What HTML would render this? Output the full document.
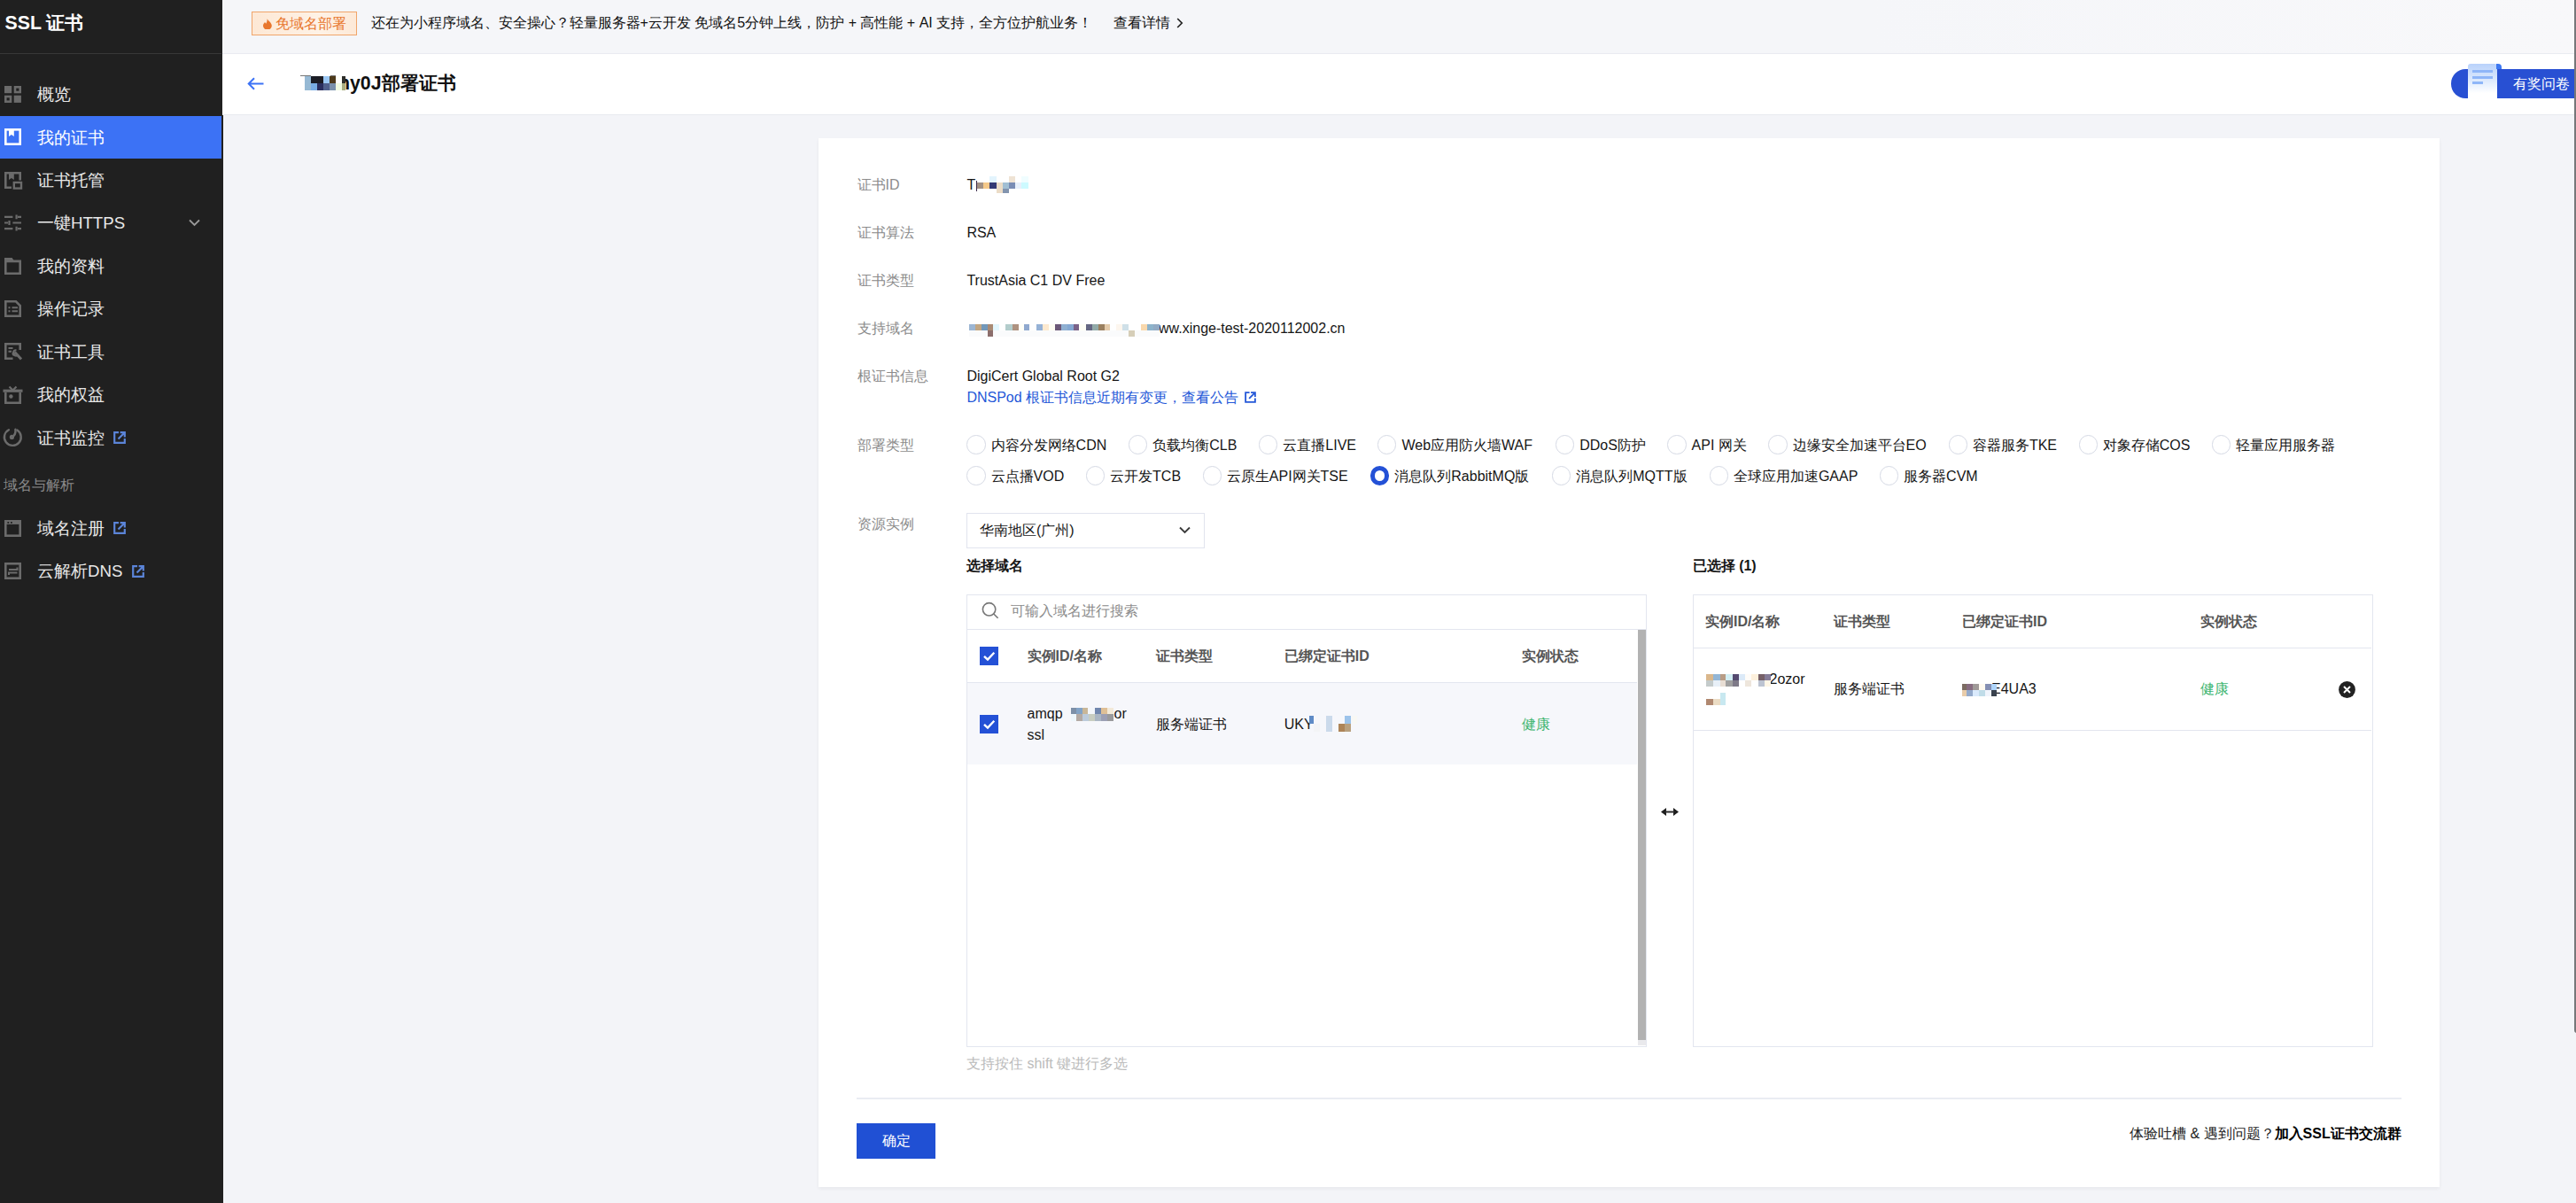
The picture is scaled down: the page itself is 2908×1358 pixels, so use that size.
<!DOCTYPE html>
<html lang="zh"><head><meta charset="utf-8"><title>SSL 证书</title>
<style>
*{box-sizing:border-box;margin:0;padding:0}
html,body{width:2908px;height:1358px;overflow:hidden}
body{font-family:"Liberation Sans",sans-serif;font-size:16px;color:#161616;background:#f3f4f8;position:relative;line-height:24px}
.abs{position:absolute}
#side{position:absolute;left:0;top:0;width:251.5px;height:1358px;background:#202020}
#side .hd{position:absolute;left:0;top:0;width:250px;height:61.1px;border-bottom:1.2px solid #383838}
#side .hd span{position:absolute;left:5.5px;top:11.5px;font-size:21.3px;font-weight:bold;color:#fff;line-height:28px;white-space:nowrap}
.mi{position:absolute;left:0;width:251px;height:48.4px;color:#e8e8e8;font-size:18.67px;line-height:48.4px;white-space:nowrap}
.mi.on{background:#3c72f5;color:#fff;width:250.3px}
.mi svg.ic{position:absolute;left:4.9px;top:14.4px;width:19px;height:19px}
.mi span{position:absolute;left:42px;top:0.5px}
.mi svg.ext{position:absolute;top:17px;width:14px;height:14px}
.sec{position:absolute;left:4px;color:#8a8a8a;font-size:16px;line-height:24px;white-space:nowrap}
#banner{position:absolute;left:251px;top:0;width:2657px;height:61.1px;background:linear-gradient(90deg,#f5f6f9 0%,#f5f6f9 70%,#f8f8fa 100%);border-bottom:1.2px solid #e9ebf1}
#phead{position:absolute;left:251px;top:61px;width:2657px;height:68.6px;background:#fff;border-bottom:1.8px solid #e8eaf0}
#card{position:absolute;left:924px;top:156px;width:1830px;height:1184px;background:#fff;box-shadow:0 2px 4px rgba(0,0,0,.05)}
.t{position:absolute;white-space:nowrap;line-height:24px}
.lb{color:#8c8c8c}
.rd{position:absolute;width:21.3px;height:21.3px;border-radius:50%;border:1.3px solid #d5d9e4;background:#fff}
.rd.on{border:5.5px solid #2451d6}
</style></head><body>
<div id="side">
<div class="hd"><span>SSL 证书</span></div>
<div class="mi" style="top:82.8px"><svg class="ic" viewBox="0 0 19 19" overflow="visible"><rect x="0" y="0" width="8.2" height="8.2" fill="#6b6b6b"/><rect x="12" y="1.3" width="5.7" height="5.7" fill="none" stroke="#6b6b6b" stroke-width="2.6"/><rect x="1.3" y="12" width="5.7" height="5.7" fill="none" stroke="#6b6b6b" stroke-width="2.6"/><rect x="10.7" y="10.7" width="8.2" height="8.2" fill="#6b6b6b"/></svg><span>概览</span></div>
<div class="mi on" style="top:131.0px"><svg class="ic" viewBox="0 0 19 19" overflow="visible"><rect x="1.3" y="1.3" width="16.4" height="16.4" fill="none" stroke="#fff" stroke-width="2.6"/><path d="M5 0H10.8V9L7.9 7L5 9Z" fill="#fff"/></svg><span>我的证书</span></div>
<div class="mi" style="top:179.4px"><svg class="ic" viewBox="0 0 19 19" overflow="visible"><path d="M8 17.7H1.3V1.3H17.7V9.5" fill="none" stroke="#6b6b6b" stroke-width="2.6"/><path d="M5 0H10.8V9L7.9 7L5 9Z" fill="#6b6b6b"/><rect x="10.8" y="12" width="8.2" height="6.6" fill="none" stroke="#6b6b6b" stroke-width="2.4"/></svg><span>证书托管</span></div>
<div class="mi" style="top:227.8px"><svg class="ic" viewBox="0 0 19 19" overflow="visible"><g stroke="#6b6b6b" stroke-width="2.2" fill="none"><path d="M0 2.8H9.4M15 2.8H19M13.6 0.4V5.2"/><path d="M0 9.5H4M5.5 7.1V11.9M9.4 9.5H19"/><path d="M0 16.2H9.4M15 16.2H19M13.6 13.8V18.6"/></g></svg><span>一键HTTPS</span><svg class="ext" style="left:213px;top:19px;width:13px;height:9px" viewBox="0 0 13 9"><path d="M1 1.5L6.5 7L12 1.5" fill="none" stroke="#9a9a9a" stroke-width="1.8"/></svg></div>
<div class="mi" style="top:276.2px"><svg class="ic" viewBox="0 0 19 19" overflow="visible"><path d="M1.3 3.9H17.7V17.7H1.3Z" fill="none" stroke="#6b6b6b" stroke-width="2.6"/><path d="M0 0H8.6L11 3.4H0Z" fill="#6b6b6b"/></svg><span>我的资料</span></div>
<div class="mi" style="top:324.7px"><svg class="ic" viewBox="0 0 19 19" overflow="visible"><path d="M1.3 1.3H13L17.7 6V17.7H1.3Z" fill="none" stroke="#6b6b6b" stroke-width="2.6"/><path d="M4.5 8.3H6.5M8.5 8.3H15M4.5 12.3H6.5M8.5 12.3H15" stroke="#6b6b6b" stroke-width="2" fill="none"/></svg><span>操作记录</span></div>
<div class="mi" style="top:373.1px"><svg class="ic" viewBox="0 0 19 19" overflow="visible"><path d="M9.5 17.7H1.3V1.3H17.7V8" fill="none" stroke="#6b6b6b" stroke-width="2.6"/><path d="M4.5 6H9.5M4.5 9.8H8" stroke="#6b6b6b" stroke-width="2" fill="none"/><path d="M9 13.5L12.5 11.5L19 18.5" stroke="#6b6b6b" stroke-width="3" fill="none"/><path d="M13.5 8.5A3 3 0 1 0 15.5 13" stroke="#6b6b6b" stroke-width="2.2" fill="none"/></svg><span>证书工具</span></div>
<div class="mi" style="top:421.6px"><svg class="ic" viewBox="0 0 19 19" overflow="visible"><path d="M-1.5 5.2H20.5" stroke="#6b6b6b" stroke-width="3.2"/><path d="M5.5 0.5L9.5 4.5L13.5 0.5" stroke="#6b6b6b" stroke-width="2.2" fill="none"/><path d="M1.3 7V18.7H17.7V7" fill="none" stroke="#6b6b6b" stroke-width="2.6"/><circle cx="7.4" cy="11.5" r="2.2" fill="#6b6b6b"/></svg><span>我的权益</span></div>
<div class="mi" style="top:470.0px"><svg class="ic" viewBox="0 0 19 19" overflow="visible"><g transform="translate(-0.6,-0.6)"><path d="M5.5 1.8A9.4 9.4 0 1 0 15 2.2" fill="none" stroke="#6b6b6b" stroke-width="2.4" stroke-linecap="round"/><circle cx="9" cy="10" r="2.6" fill="#6b6b6b"/><path d="M9 10C12 8.5 13.5 5 13 1.2" stroke="#6b6b6b" stroke-width="2.4" fill="none" stroke-linecap="round"/></g></svg><span>证书监控</span><svg class="ext" style="left:127.5px" viewBox="0 0 14 14"><path d="M6 1.2H1.2V12.8H12.8V8" fill="none" stroke="#5b84d8" stroke-width="2.2"/><path d="M5.5 8.5L12.5 1.5M7.6 1.2H12.8V6.4" fill="none" stroke="#5b84d8" stroke-width="2.2"/></svg></div>
<div class="mi" style="top:572.2px"><svg class="ic" viewBox="0 0 19 19" overflow="visible"><rect x="1.3" y="1.3" width="16.4" height="16.4" fill="none" stroke="#6b6b6b" stroke-width="2.6"/><rect x="1.3" y="1.3" width="16.4" height="3.6" fill="#6b6b6b"/><rect x="3.4" y="2" width="1.8" height="1.8" fill="#202020"/><rect x="7" y="2" width="1.8" height="1.8" fill="#202020"/></svg><span>域名注册</span><svg class="ext" style="left:127.5px" viewBox="0 0 14 14"><path d="M6 1.2H1.2V12.8H12.8V8" fill="none" stroke="#5b84d8" stroke-width="2.2"/><path d="M5.5 8.5L12.5 1.5M7.6 1.2H12.8V6.4" fill="none" stroke="#5b84d8" stroke-width="2.2"/></svg></div>
<div class="mi" style="top:620.6px"><svg class="ic" viewBox="0 0 19 19" overflow="visible"><rect x="1.3" y="1.3" width="16.4" height="16.4" fill="none" stroke="#6b6b6b" stroke-width="2.6"/><path d="M5 8H14.5V5.5M14.5 11.5H5V14" stroke="#6b6b6b" stroke-width="2" fill="none"/></svg><span>云解析DNS</span><svg class="ext" style="left:149px" viewBox="0 0 14 14"><path d="M6 1.2H1.2V12.8H12.8V8" fill="none" stroke="#5b84d8" stroke-width="2.2"/><path d="M5.5 8.5L12.5 1.5M7.6 1.2H12.8V6.4" fill="none" stroke="#5b84d8" stroke-width="2.2"/></svg></div>
<div class="sec" style="top:535.6px">域名与解析</div>
</div>
<div id="banner">
<div class="abs" style="left:33px;top:12.5px;width:118.5px;height:27px;border:1.3px solid #f0a56a;background:linear-gradient(90deg,#fde8d5 0%,#fef2e6 65%,#fde9d7 100%)"></div>
<svg class="abs" style="left:45.5px;top:20.5px;width:10px;height:12.5px" viewBox="0 0 10 12.5"><path d="M4.6 0C5.4 2.4 9.8 4.6 9.8 8A4.9 4.6 0 0 1 0 8C0 6.4 1.2 5.2 2 4C2.6 4.6 3 5.2 3.2 5.8C4.2 4.4 4.8 2.2 4.6 0Z" fill="#e8762c"/></svg>
<div class="t" style="left:59.5px;top:14.5px;color:#e8762c">免域名部署</div>
<div class="t" style="left:167.5px;top:14px;color:#111">还在为小程序域名、安全操心？轻量服务器+云开发 免域名5分钟上线，防护 + 高性能 + AI 支持，全方位护航业务！</div>
<div class="t" style="left:1006px;top:14px;color:#111">查看详情</div>
<svg class="abs" style="left:1077px;top:20px;width:8px;height:12px" viewBox="0 0 8 12"><path d="M1.2 1L6.2 6L1.2 11" fill="none" stroke="#222" stroke-width="1.7"/></svg>
</div>
<div id="phead">
<svg class="abs" style="left:28px;top:25.5px;width:19px;height:15px" viewBox="0 0 19 15"><path d="M18.5 7.5H2M8 1.2L1.7 7.5L8 13.8" fill="none" stroke="#3c72f5" stroke-width="2"/></svg>
<div class="t" style="left:131px;top:19px;font-size:21.3px;font-weight:bold;line-height:28px;color:#111">hy0J部署证书</div>
<div class="abs" style="left:2516px;top:17px;width:160px;height:32.5px;background:#2850d3;border-radius:16.25px 0 0 16.25px"></div>
<div class="abs" style="left:2535px;top:10.5px;width:32.5px;height:39px;background:linear-gradient(180deg,#b9d2fb 0%,#dbe8fd 45%,#fff 85%);border-radius:3px 3px 0 0"></div>
<div class="abs" style="left:2567px;top:10.5px;width:6px;height:6.5px;background:#3d78f2;border-radius:0 4px 0 0"></div>
<div class="abs" style="left:2540px;top:18px;width:23px;height:3px;background:#8fb6f8"></div>
<div class="abs" style="left:2540px;top:24.5px;width:23px;height:3px;background:#8fb6f8"></div>
<div class="abs" style="left:2540px;top:31px;width:11.5px;height:3px;background:#8fb6f8"></div>
<div class="t" style="left:2586px;top:21.5px;color:#fff;font-size:16px">有奖问卷，</div>
</div>
<div id="card"></div>
<div id="content">
<div class="t lb" style="left:967.5px;top:197.3px;">证书ID</div>
<div class="t lb" style="left:967.5px;top:251.1px;">证书算法</div>
<div class="t lb" style="left:967.5px;top:304.9px;">证书类型</div>
<div class="t lb" style="left:967.5px;top:359.0px;">支持域名</div>
<div class="t lb" style="left:967.5px;top:412.6px;">根证书信息</div>
<div class="t lb" style="left:967.5px;top:490.7px;">部署类型</div>
<div class="t lb" style="left:967.5px;top:579.6px;">资源实例</div>
<div class="t" style="left:1091.4px;top:197.3px;">T</div>
<div class="t" style="left:1091.4px;top:251.1px;">RSA</div>
<div class="t" style="left:1091.4px;top:304.9px;">TrustAsia C1 DV Free</div>
<div class="t" style="left:1308px;top:359.0px;">ww.xinge-test-2020112002.cn</div>
<div class="t" style="left:1091.4px;top:412.6px;">DigiCert Global Root G2</div>
<div class="t" style="left:1091.4px;top:436.9px;color:#2558d8">DNSPod 根证书信息近期有变更，查看公告</div>
<svg class="abs" style="left:1405px;top:442px;width:13px;height:13px" viewBox="0 0 14 14"><path d="M6 1.2H1.2V12.8H12.8V8" fill="none" stroke="#2558d8" stroke-width="2"/><path d="M5.5 8.5L12.5 1.5M7.6 1.2H12.8V6.4" fill="none" stroke="#2558d8" stroke-width="2"/></svg>
<div class="rd" style="left:1091.3px;top:491.3px"></div>
<div class="t" style="left:1118.6px;top:490.7px;">内容分发网络CDN</div>
<div class="rd" style="left:1274px;top:491.3px"></div>
<div class="t" style="left:1301.3px;top:490.7px;">负载均衡CLB</div>
<div class="rd" style="left:1421px;top:491.3px"></div>
<div class="t" style="left:1448.3px;top:490.7px;">云直播LIVE</div>
<div class="rd" style="left:1555.2px;top:491.3px"></div>
<div class="t" style="left:1582.5px;top:490.7px;">Web应用防火墙WAF</div>
<div class="rd" style="left:1755.9px;top:491.3px"></div>
<div class="t" style="left:1783.2px;top:490.7px;">DDoS防护</div>
<div class="rd" style="left:1882.3px;top:491.3px"></div>
<div class="t" style="left:1909.6px;top:490.7px;">API 网关</div>
<div class="rd" style="left:1996.3px;top:491.3px"></div>
<div class="t" style="left:2023.6px;top:490.7px;">边缘安全加速平台EO</div>
<div class="rd" style="left:2199.6px;top:491.3px"></div>
<div class="t" style="left:2226.9px;top:490.7px;">容器服务TKE</div>
<div class="rd" style="left:2346.5px;top:491.3px"></div>
<div class="t" style="left:2373.8px;top:490.7px;">对象存储COS</div>
<div class="rd" style="left:2497.1px;top:491.3px"></div>
<div class="t" style="left:2524.4px;top:490.7px;">轻量应用服务器</div>
<div class="rd" style="left:1091.3px;top:526.3px"></div>
<div class="t" style="left:1118.6px;top:525.7px;">云点播VOD</div>
<div class="rd" style="left:1225.8px;top:526.3px"></div>
<div class="t" style="left:1253.1px;top:525.7px;">云开发TCB</div>
<div class="rd" style="left:1357.5px;top:526.3px"></div>
<div class="t" style="left:1384.8px;top:525.7px;">云原生API网关TSE</div>
<div class="rd on" style="left:1547px;top:526.3px"></div>
<div class="t" style="left:1574.3px;top:525.7px;">消息队列RabbitMQ版</div>
<div class="rd" style="left:1751.9px;top:526.3px"></div>
<div class="t" style="left:1779.2px;top:525.7px;">消息队列MQTT版</div>
<div class="rd" style="left:1929.6px;top:526.3px"></div>
<div class="t" style="left:1956.9px;top:525.7px;">全球应用加速GAAP</div>
<div class="rd" style="left:2121.8px;top:526.3px"></div>
<div class="t" style="left:2149.1px;top:525.7px;">服务器CVM</div>
<div class="abs" style="left:1091px;top:579px;width:269px;height:40px;border:1.3px solid #e1e4ee;background:#fff"></div>
<div class="t" style="left:1106.0px;top:587.2px;">华南地区(广州)</div>
<svg class="abs" style="left:1331px;top:594.2px;width:13px;height:9px" viewBox="0 0 13 9"><path d="M1 1.5L6.5 7L12 1.5" fill="none" stroke="#3a3a3a" stroke-width="1.9"/></svg>
<div class="t" style="left:1091.3px;top:627.4px;font-weight:bold">选择域名</div>
<div class="t" style="left:1910.7px;top:626.9px;font-weight:bold">已选择 (1)</div>
<div class="abs" style="left:1091px;top:670.5px;width:768px;height:511px;border:1.3px solid #e3e6ef;background:#fff"></div>
<div class="abs" style="left:1091px;top:709.6px;width:768px;height:1.3px;background:#e3e6ef"></div>
<svg class="abs" style="left:1107.5px;top:679.3px;width:20px;height:20px" viewBox="0 0 20 20"><circle cx="8.6" cy="8.8" r="7.2" fill="none" stroke="#777" stroke-width="1.6"/><path d="M13.8 14L18.6 18.8" stroke="#777" stroke-width="1.6"/></svg>
<div class="t" style="left:1141.0px;top:678.2px;color:#8c8c8c">可输入域名进行搜索</div>
<div class="abs" style="left:1092.3px;top:770px;width:756px;height:1.3px;background:#e3e6ef"></div>
<div class="abs" style="left:1092.3px;top:771.3px;width:756px;height:91.3px;background:#f6f7fb"></div>
<div class="abs" style="left:1105.8px;top:730px;width:21.3px;height:21.3px"><svg viewBox="0 0 21.3 21.3" width="21.3" height="21.3"><rect width="21.3" height="21.3" fill="#2451d6"/><path d="M5 10.8L9 14.6L16.3 6.8" fill="none" stroke="#fff" stroke-width="2.4"/></svg></div>
<div class="abs" style="left:1105.8px;top:807px;width:21.3px;height:21.3px"><svg viewBox="0 0 21.3 21.3" width="21.3" height="21.3"><rect width="21.3" height="21.3" fill="#2451d6"/><path d="M5 10.8L9 14.6L16.3 6.8" fill="none" stroke="#fff" stroke-width="2.4"/></svg></div>
<div class="t" style="left:1159.5px;top:728.7px;font-weight:bold;color:#555">实例ID/名称</div>
<div class="t" style="left:1304.6px;top:728.7px;font-weight:bold;color:#555">证书类型</div>
<div class="t" style="left:1449.7px;top:728.7px;font-weight:bold;color:#555">已绑定证书ID</div>
<div class="t" style="left:1717.7px;top:728.7px;font-weight:bold;color:#555">实例状态</div>
<div class="t" style="left:1159.5px;top:793.6px;">amqp</div>
<div class="t" style="left:1257.5px;top:793.6px;">or</div>
<div class="t" style="left:1159.5px;top:818.0px;">ssl</div>
<div class="t" style="left:1304.6px;top:805.7px;">服务端证书</div>
<div class="t" style="left:1449.7px;top:805.7px;">UKY</div>
<div class="t" style="left:1717.7px;top:805.7px;color:#3db56f">健康</div>
<div class="abs" style="left:1848.5px;top:710.5px;width:9.6px;height:463px;background:#b2b2b2"></div>
<div class="abs" style="left:1848.5px;top:1173.5px;width:9.6px;height:6.5px;background:#e9e9ec"></div>
<svg class="abs" style="left:1875px;top:912px;width:20px;height:9px" viewBox="0 0 20 9"><path d="M0 4.5L6 0V9ZM20 4.5L14 0V9Z" fill="#1e1e1e"/><path d="M5 4.5H15" stroke="#2e2e2e" stroke-width="2"/></svg>
<div class="abs" style="left:1910.5px;top:670.5px;width:768px;height:511px;border:1.3px solid #e3e6ef;background:#fff"></div>
<div class="abs" style="left:1911.8px;top:730.8px;width:765.4px;height:1.3px;background:#e3e6ef"></div>
<div class="abs" style="left:1911.8px;top:823.7px;width:765.4px;height:1.3px;background:#e3e6ef"></div>
<div class="t" style="left:1925px;top:689.7px;font-weight:bold;color:#555">实例ID/名称</div>
<div class="t" style="left:2070.4px;top:689.7px;font-weight:bold;color:#555">证书类型</div>
<div class="t" style="left:2215px;top:689.7px;font-weight:bold;color:#555">已绑定证书ID</div>
<div class="t" style="left:2483.9px;top:689.7px;font-weight:bold;color:#555">实例状态</div>
<div class="t" style="left:1997.5px;top:754.7px;">2ozor</div>
<div class="t" style="left:2070.4px;top:766.2px;">服务端证书</div>
<div class="t" style="left:2248px;top:766.2px;">E4UA3</div>
<div class="t" style="left:2483.9px;top:766.2px;color:#3db56f">健康</div>
<svg class="abs" style="left:2639.5px;top:768.5px;width:19px;height:19px" viewBox="0 0 19 19"><circle cx="9.5" cy="9.5" r="9.4" fill="#222"/><path d="M6 6L13 13M13 6L6 13" stroke="#fff" stroke-width="2"/></svg>
<div class="t" style="left:1091px;top:1189.3px;color:#bbb">支持按住 shift 键进行多选</div>
<div class="abs" style="left:967.4px;top:1239.3px;width:1743.3px;height:1.3px;background:#eaecf3"></div>
<div class="abs" style="left:967.4px;top:1267.7px;width:88.8px;height:40.3px;background:#2050d4;color:#fff;text-align:center;line-height:39px;font-size:16px">确定</div>
<div class="t" style="right:197.3px;top:1267.7px;color:#222">体验吐槽 &amp; 遇到问题？<b style="color:#000">加入SSL证书交流群</b></div>
<div class="abs" style="left:2906px;top:-10px;width:6px;height:1176px;border-radius:4px;background:#76777a"></div>
<svg class="abs" id="mosaic" style="left:0;top:0;width:2908px;height:1358px;pointer-events:none" viewBox="0 0 2908 1358" shape-rendering="crispEdges"><rect x="344.2" y="84.0" width="45.8" height="19.0" fill="#fff"/><rect x="344.2" y="85.9" width="7.0" height="8.0" fill="#96b9d4"/><rect x="344.2" y="93.9" width="7.0" height="8.0" fill="#96b9d4"/><rect x="351.2" y="85.9" width="7.0" height="8.0" fill="#1b1d26"/><rect x="351.2" y="93.9" width="7.0" height="8.0" fill="#78ace4"/><rect x="358.2" y="85.9" width="7.0" height="8.0" fill="#1c1c24"/><rect x="358.2" y="93.9" width="7.0" height="8.0" fill="#2a2e5e"/><rect x="365.2" y="85.9" width="7.0" height="8.0" fill="#9cc8f4"/><rect x="365.2" y="93.9" width="7.0" height="8.0" fill="#50608c"/><rect x="372.2" y="85.9" width="6.9" height="8.0" fill="#4d3a1b"/><rect x="372.2" y="93.9" width="6.9" height="8.0" fill="#7a90aa"/><rect x="379.1" y="85.9" width="7.0" height="8.0" fill="#fffffa"/><rect x="379.1" y="93.9" width="7.0" height="8.0" fill="#f0fbe0"/><rect x="386.1" y="85.9" width="3.8" height="8.0" fill="#2e2e2a"/><rect x="386.1" y="93.9" width="3.8" height="8.0" fill="#a8ac82"/><rect x="339.0" y="85.2" width="12.4" height="1.0" fill="#777"/><rect x="373.0" y="85.2" width="6.0" height="1.0" fill="#777"/><rect x="1102.0" y="199.0" width="59.0" height="20.0" fill="#fff"/><rect x="1117.2" y="199.1" width="7.8" height="6.8" fill="#e3f4fd"/><rect x="1139.0" y="199.1" width="7.2" height="6.8" fill="#efe3d4"/><rect x="1153.2" y="199.1" width="7.6" height="6.8" fill="#f0fdff"/><rect x="1103.0" y="205.9" width="7.1" height="7.0" fill="#a39285"/><rect x="1110.1" y="205.9" width="7.1" height="7.0" fill="#f5c98a"/><rect x="1117.2" y="205.9" width="7.8" height="7.0" fill="#343a74"/><rect x="1125.0" y="205.9" width="7.0" height="7.0" fill="#ebdcc7"/><rect x="1132.0" y="205.9" width="7.0" height="7.0" fill="#a2bfd3"/><rect x="1139.0" y="205.9" width="7.2" height="7.0" fill="#7a8db5"/><rect x="1146.2" y="205.9" width="7.0" height="7.0" fill="#e8f0fb"/><rect x="1153.2" y="205.9" width="7.6" height="7.0" fill="#cdfaff"/><rect x="1125.0" y="212.9" width="7.0" height="5.1" fill="#ebdcc7"/><rect x="1132.0" y="212.9" width="7.0" height="5.1" fill="#8294ae"/><rect x="1101.5" y="204.0" width="1.5" height="12.0" fill="#3a2a4a"/><rect x="1093.9" y="366.0" width="7.0" height="6.9" fill="#9cb6d3"/><rect x="1100.8" y="366.0" width="7.0" height="6.9" fill="#c2a682"/><rect x="1107.8" y="366.0" width="7.0" height="6.9" fill="#7298ba"/><rect x="1114.8" y="366.0" width="6.1" height="6.9" fill="#a98a74"/><rect x="1120.9" y="366.0" width="7.0" height="6.9" fill="#e3f6fd"/><rect x="1134.8" y="366.0" width="7.9" height="6.9" fill="#b3cdcc"/><rect x="1142.8" y="366.0" width="7.0" height="6.9" fill="#ae9280"/><rect x="1149.8" y="366.0" width="6.1" height="6.9" fill="#fffff8"/><rect x="1155.8" y="366.0" width="6.5" height="6.9" fill="#90a9cf"/><rect x="1170.3" y="366.0" width="6.5" height="6.9" fill="#96b2d6"/><rect x="1176.8" y="366.0" width="7.0" height="6.9" fill="#fde9cf"/><rect x="1183.8" y="366.0" width="7.0" height="6.9" fill="#fffef4"/><rect x="1190.7" y="366.0" width="7.0" height="6.9" fill="#6c5878"/><rect x="1197.7" y="366.0" width="7.0" height="6.9" fill="#8fb0d2"/><rect x="1204.7" y="366.0" width="7.0" height="6.9" fill="#85a8d2"/><rect x="1211.7" y="366.0" width="6.5" height="6.9" fill="#7a6288"/><rect x="1218.2" y="366.0" width="7.5" height="6.9" fill="#fffff6"/><rect x="1225.7" y="366.0" width="7.0" height="6.9" fill="#656783"/><rect x="1232.7" y="366.0" width="7.0" height="6.9" fill="#92aaa8"/><rect x="1239.7" y="366.0" width="7.0" height="6.9" fill="#9a8060"/><rect x="1246.7" y="366.0" width="6.5" height="6.9" fill="#e4cbab"/><rect x="1260.2" y="366.0" width="7.0" height="6.9" fill="#fdf6ee"/><rect x="1267.1" y="366.0" width="7.0" height="6.9" fill="#cfe0e8"/><rect x="1288.1" y="366.0" width="7.0" height="6.9" fill="#f9d8ac"/><rect x="1295.1" y="366.0" width="7.0" height="6.9" fill="#8db3cb"/><rect x="1302.1" y="366.0" width="6.5" height="6.9" fill="#92aac4"/><rect x="1093.9" y="372.9" width="214.8" height="7.1" fill="#fafbfc"/><rect x="1114.8" y="372.9" width="6.1" height="7.1" fill="#8c6e6c"/><rect x="1274.1" y="372.9" width="7.0" height="7.1" fill="#d6ceb8"/><rect x="1208.5" y="799.2" width="6.1" height="6.8" fill="#7d90a8"/><rect x="1214.6" y="799.2" width="7.0" height="6.8" fill="#82a3c6"/><rect x="1221.6" y="799.2" width="6.7" height="6.8" fill="#c9b798"/><rect x="1228.3" y="799.2" width="7.3" height="6.8" fill="#f4f7fb"/><rect x="1235.5" y="799.2" width="7.3" height="6.8" fill="#7187ae"/><rect x="1242.8" y="799.2" width="7.3" height="6.8" fill="#dfc096"/><rect x="1250.1" y="799.2" width="7.0" height="6.8" fill="#f3ead9"/><rect x="1208.5" y="806.0" width="6.1" height="7.5" fill="#eef6fb"/><rect x="1214.6" y="806.0" width="7.0" height="7.5" fill="#b3aaa4"/><rect x="1221.6" y="806.0" width="7.3" height="7.5" fill="#bccbdb"/><rect x="1228.8" y="806.0" width="6.7" height="7.5" fill="#c8cdc0"/><rect x="1235.5" y="806.0" width="7.3" height="7.5" fill="#aab6c3"/><rect x="1242.8" y="806.0" width="7.3" height="7.5" fill="#9c9fb4"/><rect x="1250.1" y="806.0" width="7.0" height="7.5" fill="#9a9a9c"/><rect x="1478.2" y="808.4" width="4.7" height="8.6" fill="#5f8bc6"/><rect x="1497.1" y="808.4" width="6.8" height="17.5" fill="#cbdaeb"/><rect x="1511.0" y="817.0" width="7.0" height="8.9" fill="#ad8457"/><rect x="1518.0" y="808.4" width="6.8" height="8.6" fill="#9cc3ea"/><rect x="1518.0" y="817.0" width="6.8" height="8.9" fill="#b8a07e"/><rect x="1483.1" y="817.0" width="6.8" height="8.9" fill="#f3f4f6"/><rect x="1525.9" y="808.4" width="6.1" height="8.6" fill="#f8f8f4"/><rect x="1926.1" y="761.0" width="7.9" height="6.8" fill="#dab78c"/><rect x="1926.1" y="767.8" width="7.9" height="7.1" fill="#c4cbcb"/><rect x="1934.0" y="761.0" width="8.0" height="6.8" fill="#93b6d6"/><rect x="1934.0" y="767.8" width="8.0" height="7.1" fill="#e8f0f8"/><rect x="1942.0" y="761.0" width="6.0" height="6.8" fill="#b89c86"/><rect x="1942.0" y="767.8" width="6.0" height="7.1" fill="#e8ded4"/><rect x="1948.0" y="761.0" width="7.8" height="6.8" fill="#d3eff5"/><rect x="1948.0" y="767.8" width="7.8" height="7.1" fill="#a0a0a0"/><rect x="1955.8" y="761.0" width="7.1" height="6.8" fill="#554a70"/><rect x="1955.8" y="767.8" width="7.1" height="7.1" fill="#7e7a88"/><rect x="1962.9" y="761.0" width="7.3" height="6.8" fill="#dceaf8"/><rect x="1962.9" y="767.8" width="7.3" height="7.1" fill="#fff"/><rect x="1970.2" y="761.0" width="6.8" height="6.8" fill="#fffcf8"/><rect x="1970.2" y="767.8" width="6.8" height="7.1" fill="#eee6dc"/><rect x="1977.0" y="761.0" width="7.6" height="6.8" fill="#fdf0dc"/><rect x="1977.0" y="767.8" width="7.6" height="7.1" fill="#fff"/><rect x="1984.6" y="761.0" width="7.5" height="6.8" fill="#766068"/><rect x="1984.6" y="767.8" width="7.5" height="7.1" fill="#bcc3d1"/><rect x="1992.1" y="761.0" width="6.9" height="6.8" fill="#857c98"/><rect x="1992.1" y="767.8" width="6.9" height="7.1" fill="#fef6e6"/><rect x="1942.0" y="782.0" width="6.0" height="7.0" fill="#c8e8f0"/><rect x="1926.1" y="789.0" width="7.9" height="6.8" fill="#b08870"/><rect x="1934.0" y="789.0" width="8.0" height="6.8" fill="#ebdcc4"/><rect x="1942.0" y="789.0" width="6.0" height="6.8" fill="#c8e8f0"/><rect x="2214.9" y="772.1" width="5.0" height="6.9" fill="#7c6c62"/><rect x="2214.9" y="779.0" width="5.0" height="6.8" fill="#e8ccaa"/><rect x="2219.9" y="772.1" width="7.0" height="6.9" fill="#876c80"/><rect x="2219.9" y="779.0" width="7.0" height="6.8" fill="#94aacb"/><rect x="2226.9" y="772.1" width="7.0" height="6.9" fill="#a09a98"/><rect x="2226.9" y="779.0" width="7.0" height="6.8" fill="#daeafc"/><rect x="2233.9" y="772.1" width="7.2" height="6.9" fill="#fffaf0"/><rect x="2233.9" y="779.0" width="7.2" height="6.8" fill="#c0dce8"/><rect x="2241.1" y="772.1" width="6.8" height="6.9" fill="#8590b4"/><rect x="2241.1" y="779.0" width="6.8" height="6.8" fill="#f0f4fc"/><rect x="2247.9" y="772.1" width="6.0" height="6.9" fill="#aed4fa"/><rect x="2247.9" y="779.0" width="6.0" height="6.8" fill="#3a424e"/></svg>
</div>
</body></html>
